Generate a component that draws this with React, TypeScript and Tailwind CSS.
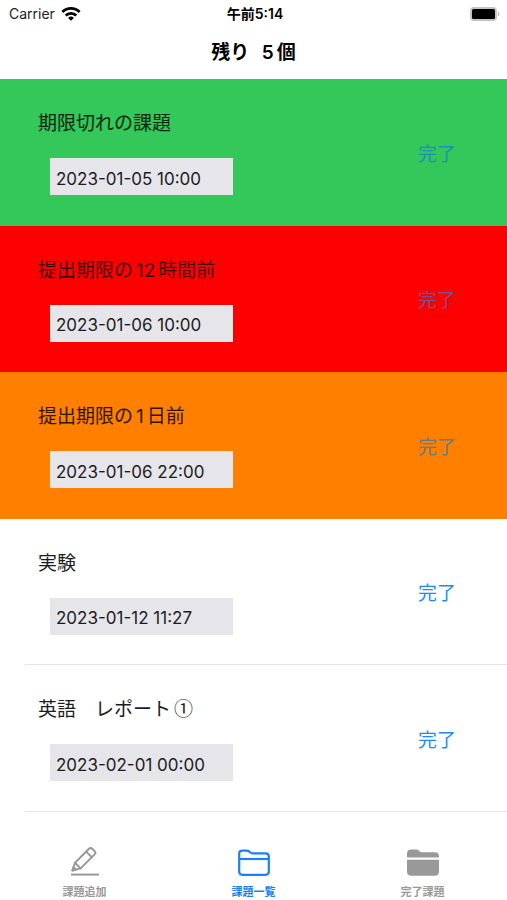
import { useState } from "react";
import clsx from "clsx";

interface Task {
  id: number;
  title: string;
  deadline: string;
  rowClass: string;
  doneClass: string;
}

interface TabItem {
  id: string;
  label: string;
  icon: React.ReactNode;
}

const tasks: Task[] = [
  {
    id: 1,
    title: "期限切れの課題",
    deadline: "2023-01-05 10:00",
    rowClass: "bg-[#34c759] text-[#06280f]",
    doneClass: "text-[#1e8fb8]",
  },
  {
    id: 2,
    title: "提出期限の12時間前",
    deadline: "2023-01-06 10:00",
    rowClass: "bg-[#ff0000] text-[#3a0000]",
    doneClass: "text-[#6a559c]",
  },
  {
    id: 3,
    title: "提出期限の1日前",
    deadline: "2023-01-06 22:00",
    rowClass: "bg-[#ff8000] text-[#2e1700]",
    doneClass: "text-[#627c8c]",
  },
  {
    id: 4,
    title: "実験",
    deadline: "2023-01-12 11:27",
    rowClass: "bg-white text-[#1c1c1e]",
    doneClass: "text-[#1a8cff]",
  },
  {
    id: 5,
    title: "英語　レポート①",
    deadline: "2023-02-01 00:00",
    rowClass: "bg-white text-[#1c1c1e]",
    doneClass: "text-[#1a8cff]",
  },
];

const PencilIcon = () => (
  <svg
    className="h-8 w-8"
    viewBox="0 0 32 32"
    fill="none"
    stroke="currentColor"
    strokeWidth="2"
    strokeLinecap="round"
    strokeLinejoin="round"
    aria-hidden="true"
  >
    <path d="M3.4 24.6 6 16.8 20 2.8a2.4 2.4 0 0 1 3.3 0l2.3 2.3a2.4 2.4 0 0 1 0 3.3L11.6 22.4z" />
    <path d="m17.2 5.6 5.6 5.6M6 16.8l5.6 5.6" />
    <path d="m3.4 24.6 1.1-3.4 2.5 2.4z" fill="currentColor" />
    <path d="M2 28.6h28" strokeLinecap="butt" />
  </svg>
);

const FolderIcon = () => (
  <svg
    className="h-8 w-8"
    viewBox="0 0 32 32"
    fill="none"
    stroke="currentColor"
    strokeWidth="2.2"
    strokeLinejoin="round"
    aria-hidden="true"
  >
    <path d="M1.2 25.8V7.6C1.2 5.6 2.2 4.6 4.2 4.6h4.4c1.6 0 2.2.5 3 1.2l.8.7c.6.5 1.2.8 2.2.8h12.8c2.2 0 3.4 1.2 3.4 3.2v15.3c0 2-1.2 3-3.4 3H4.4c-2.2 0-3.2-1-3.2-3z" />
    <path d="M1.2 13h29.6" />
  </svg>
);

const FolderFillIcon = () => (
  <svg
    className="h-8 w-8"
    viewBox="0 0 32 32"
    fill="currentColor"
    aria-hidden="true"
  >
    <path d="M0 11.6v-4C0 5 1.5 3.6 4.2 3.6h4.4c1.8 0 2.6.5 3.6 1.4l.7.6c.5.5 1 .7 1.8.7h13c2.8 0 4.3 1.5 4.3 4.2v1.1z" />
    <path d="M0 13.8h32v12c0 2.6-1.500 4-4.400 4H4.400C1.500 29.800 0 28.400 0 25.800z" />
  </svg>
);

const tabs: TabItem[] = [
  { id: "add", label: "課題追加", icon: <PencilIcon /> },
  { id: "list", label: "課題一覧", icon: <FolderIcon /> },
  { id: "done", label: "完了課題", icon: <FolderFillIcon /> },
];

const StatusBar = () => (
  <div className="grid grid-cols-3 items-center pt-1 pr-1.5 pl-[9px] text-sm text-[#222]">
    <div className="flex items-center gap-1.5">
      <span>Carrier</span>
      <svg
        className="h-3.5 w-5"
        viewBox="0 0 20 14"
        fill="none"
        stroke="#000"
        strokeWidth="2.8"
        aria-hidden="true"
      >
        <path d="M1.4 5a12.2 12.2 0 0 1 17.2 0" />
        <path d="M4.7 8.500a7.500 7.500 0 0 1 10.600 0" />
        <path d="M10 13.800 7.100 10.900a4.100 4.100 0 0 1 5.800 0z" fill="#000" stroke="none" />
      </svg>
    </div>
    <span className="text-center text-sm leading-5 font-semibold text-black">
      午前5:14
    </span>
    <svg
      className="h-4 w-8 justify-self-end"
      viewBox="0 0 32 16"
      aria-hidden="true"
    >
      <rect x="1" y="1" width="27" height="14" rx="4" fill="#c4c4c4" />
      <rect x="3" y="3" width="23" height="10" rx="1.5" fill="#000" />
      <path d="M29 5.700c1.800.5 1.800 4.100 0 4.600z" fill="#b5b5b5" />
    </svg>
  </div>
);

// Leaves a little air between digits and the kanji around them
const MixedText = ({ text }: { text: string }) => (
  <>
    {text.split(/(\d+|①)/).map((part, index) => {
      if (part === "①") {
        return (
          <span
            key={index}
            className="ml-[3px] font-['Noto_Sans_CJK_JP',sans-serif] leading-none"
          >
            {part}
          </span>
        );
      }
      if (/^\d+$/.test(part)) {
        return (
          <span key={index} className="mx-[3px]">
            {part}
          </span>
        );
      }
      return part;
    })}
  </>
);

interface TaskRowProps {
  task: Task;
  divider: boolean;
}

const TaskRow = ({ task, divider }: TaskRowProps) => {
  const inputId = `deadline-${task.id}`;

  return (
    <li className={clsx("flex flex-col", task.rowClass)}>
      <div className="flex flex-1 items-center justify-between pt-px pr-[51px] pl-[38px]">
        <div className="flex flex-col gap-5">
          <label htmlFor={inputId} className="text-[19px] leading-7">
            <MixedText text={task.title} />
          </label>
          <input
            id={inputId}
            type="text"
            readOnly
            value={task.deadline}
            className="ml-3 h-[37px] w-[183px] bg-[#e5e5ea] px-1.5 pt-1 text-[17px] text-[#1c1c1e] outline-none"
          />
        </div>
        <button
          type="button"
          className={clsx("pt-1 text-[19px] leading-7", task.doneClass)}
        >
          完了
        </button>
      </div>
      {divider && <div className="ml-[25px] h-px bg-[#e5e5e7]" />}
    </li>
  );
};

export default function App() {
  const [activeTab, setActiveTab] = useState("list");

  return (
    <div className="flex min-h-screen flex-col bg-white font-['Inter','Noto_Sans_CJK_JP',sans-serif]">
      <header className="flex h-[79px] flex-col">
        <StatusBar />
        <h1 className="pt-[15px] text-center text-[19px] leading-7 font-semibold whitespace-pre text-black">
          <MixedText text="残り  5個" />
        </h1>
      </header>

      <ul className="grid flex-1 auto-rows-fr">
        {tasks.map((task) => (
          <TaskRow key={task.id} task={task} divider={task.id > 3} />
        ))}
      </ul>

      <nav className="grid h-[88px] grid-cols-3">
        {tabs.map((tab) => (
          <button
            key={tab.id}
            type="button"
            onClick={() => setActiveTab(tab.id)}
            aria-current={activeTab === tab.id ? "page" : undefined}
            className={clsx(
              "flex flex-col items-center gap-1 pt-[34px] text-[11px] leading-5 font-semibold",
              activeTab === tab.id ? "text-[#1a80f5]" : "text-[#999]"
            )}
          >
            {tab.icon}
            <span>{tab.label}</span>
          </button>
        ))}
      </nav>
    </div>
  );
}
